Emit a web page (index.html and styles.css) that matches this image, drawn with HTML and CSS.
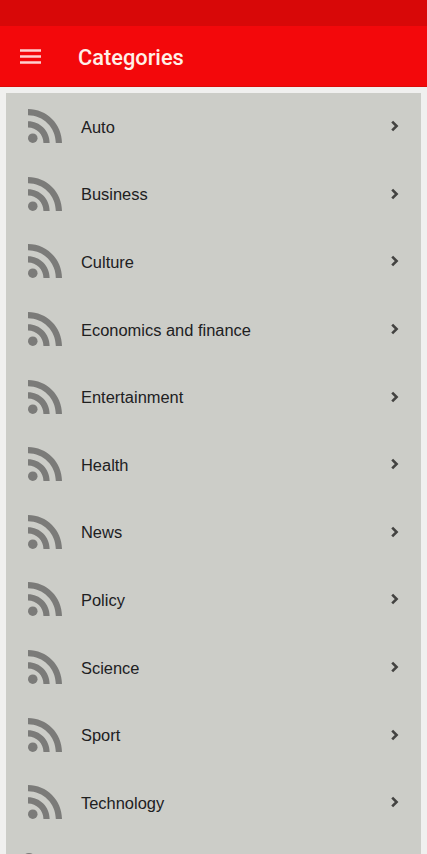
FILE: index.html
```html
<!DOCTYPE html>
<html lang="en">
<head>
    <meta charset="utf-8">
    <title>Categories</title>
    <link rel="stylesheet" href="styles.css">
</head>
<body>
    <svg class="defs">
        <symbol id="rss" viewBox="4 4.44 15.56 15.56">
            <circle cx="6.18" cy="17.82" r="2.18"/>
            <path d="M4 4.44v2.83c7.03 0 12.73 5.7 12.73 12.73h2.83c0-8.59-6.97-15.56-15.56-15.56zm0 5.66v2.83c3.9 0 7.07 3.17 7.07 7.07h2.83c0-5.47-4.43-9.9-9.9-9.9z"/>
        </symbol>
        <symbol id="arrow" viewBox="0 0 8 12">
            <path d="M1.2 1.6L5.6 6L1.2 10.4" fill="none" stroke="currentColor" stroke-width="2.6"/>
        </symbol>
    </svg>
    <div class="status-bar"></div>
    <header class="toolbar">
        <svg class="menu" viewBox="0 0 21 15"><path d="M0 1.5h21M0 7.5h21M0 13.5h21"/></svg>
        <h1>Categories</h1>
    </header>
    <ul class="list">
        <li><svg class="rss"><use href="#rss"/></svg><span>Auto</span><svg class="arrow"><use href="#arrow"/></svg></li>
        <li><svg class="rss"><use href="#rss"/></svg><span>Business</span><svg class="arrow"><use href="#arrow"/></svg></li>
        <li><svg class="rss"><use href="#rss"/></svg><span>Culture</span><svg class="arrow"><use href="#arrow"/></svg></li>
        <li><svg class="rss"><use href="#rss"/></svg><span>Economics and finance</span><svg class="arrow"><use href="#arrow"/></svg></li>
        <li><svg class="rss"><use href="#rss"/></svg><span>Entertainment</span><svg class="arrow"><use href="#arrow"/></svg></li>
        <li><svg class="rss"><use href="#rss"/></svg><span>Health</span><svg class="arrow"><use href="#arrow"/></svg></li>
        <li><svg class="rss"><use href="#rss"/></svg><span>News</span><svg class="arrow"><use href="#arrow"/></svg></li>
        <li><svg class="rss"><use href="#rss"/></svg><span>Policy</span><svg class="arrow"><use href="#arrow"/></svg></li>
        <li><svg class="rss"><use href="#rss"/></svg><span>Science</span><svg class="arrow"><use href="#arrow"/></svg></li>
        <li><svg class="rss"><use href="#rss"/></svg><span>Sport</span><svg class="arrow"><use href="#arrow"/></svg></li>
        <li><svg class="rss"><use href="#rss"/></svg><span>Technology</span><svg class="arrow"><use href="#arrow"/></svg></li>
        <li class="last"><svg class="round" viewBox="0 0 14 14"><circle cx="7" cy="7" r="7"/></svg></li>
    </ul>
</body>
</html>
```
FILE: styles.css
```css
* {
    box-sizing: border-box;
}
body {
    margin: 0;
    height: 100vh;
    display: flex;
    flex-direction: column;
    overflow: hidden;
    background-color: #f0f0ef;
    font-family: "Liberation Sans", Arial, sans-serif;
}
.defs {
    display: none;
}
.status-bar {
    flex: none;
    height: 26px;
    background-color: #d80808;
}
.toolbar {
    flex: none;
    height: 61px;
    display: flex;
    align-items: center;
    padding: 2px 20px 0;
    background-color: #f3080b;
    border-bottom: 1px solid #dc0a08;
}
.menu {
    width: 21px;
    height: 15px;
    margin-top: -2px;
    fill: none;
    stroke: #ffd0cf;
    stroke-width: 2.4;
}
.toolbar h1 {
    margin: 0 0 0 37px;
    color: #fff0e8;
    font-family: Roboto, sans-serif;
    font-size: 21.8px;
    font-weight: 500;
}
.list {
    flex: 1;
    min-height: 0;
    overflow: hidden;
    margin: 6px 6px 0 6px;
    padding: 0;
    list-style: none;
    background-color: #cccdc8;
}
.list li {
    height: 67.6px;
    display: flex;
    align-items: center;
    padding: 0 22px 1px;
}
.list span {
    flex: 1;
    margin-left: 19px;
    padding-top: 2px;
    color: #20201f;
    font-size: 16.45px;
}
.rss {
    width: 34px;
    height: 34px;
    fill: #7b7b79;
}
.arrow {
    width: 8px;
    height: 12px;
    color: #434341;
}
.list .last {
    align-items: flex-start;
    padding: 16px 16px 0;
}
.round {
    width: 14px;
    height: 14px;
    fill: #7b7b79;
}
```
